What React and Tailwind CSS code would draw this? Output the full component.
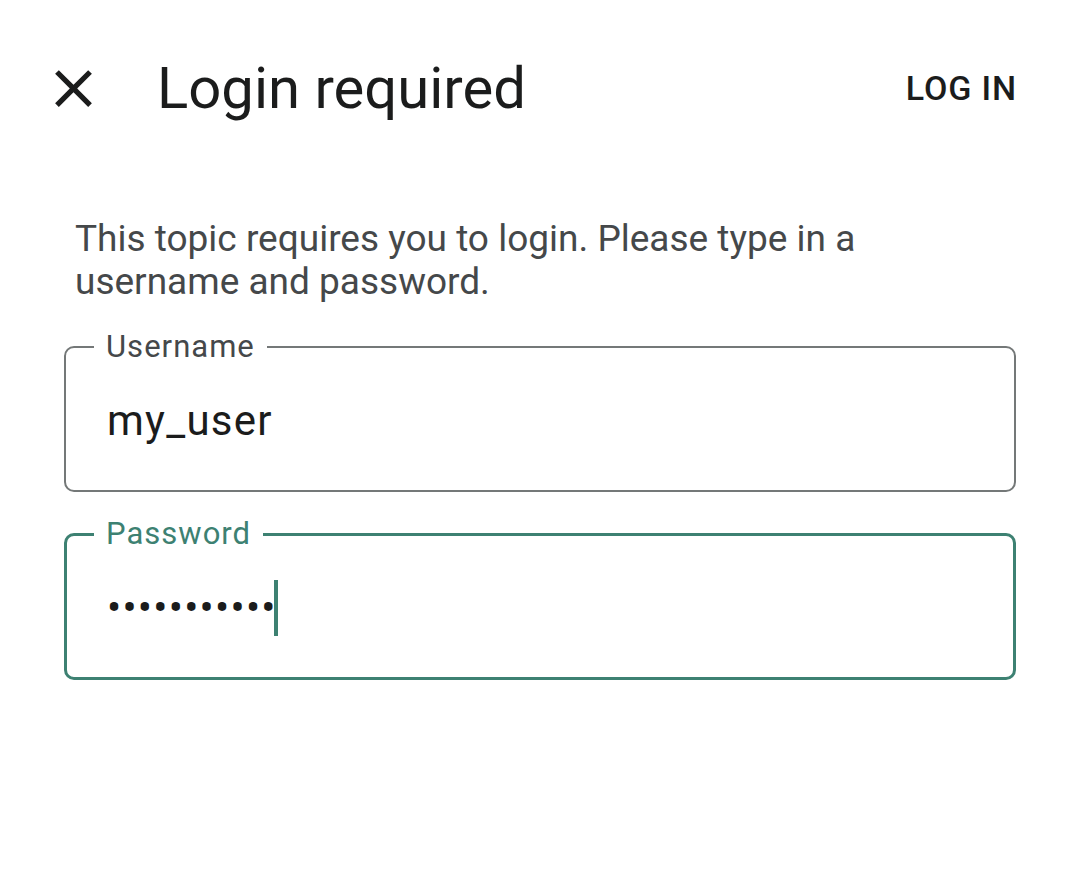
import { useState } from 'react'

function CloseIcon() {
  return (
    <svg viewBox="0 0 24 24" className="h-[63px] w-[63px] shrink-0" fill="#1b1c1c">
      <path d="M19 6.41L17.59 5 12 10.59 6.41 5 5 6.41 10.59 12 5 17.59 6.41 19 12 13.41 17.59 19 19 17.59 13.41 12z" />
    </svg>
  )
}

function App() {
  const [username] = useState('my_user')
  const passwordLength = 11

  return (
    <div
      className="min-h-screen bg-white text-[#1b1c1c]"
      style={{ fontFamily: 'Roboto, "Noto Sans", sans-serif' }}
    >
      <header className="flex h-[176px] items-center pl-[42px] pr-[63px]">
        <CloseIcon />
        <h1 className="ml-[52px] text-[58px] leading-none font-normal">Login required</h1>
        <button type="button" className="ml-auto text-[34px] leading-none font-medium tracking-[0.025em]">
          LOG IN
        </button>
      </header>

      <main className="px-[64px]">
        <p className="mt-[41px] pl-[11px] text-[37px] leading-[43px] text-[#45484a]">
          This topic requires you to login. Please type in a username and password.
        </p>

        <fieldset className="mt-[28px] h-[161px] rounded-[10px] border-2 border-[#747878] px-0 pb-0">
          <legend className="ml-[28px] px-[12px] text-[31px] leading-[32px] tracking-[0.033em] text-[#45484a]">
            Username
          </legend>
          <div className="flex h-[125px] items-center pl-[41px] pb-[10px] text-[42px] tracking-[0.03em] text-[#1b1c1c]">
            {username}
          </div>
        </fieldset>

        <fieldset className="mt-[26px] h-[162px] rounded-[10px] border-[3px] border-[#3d8172] px-0 pb-0">
          <legend className="ml-[27px] px-[12px] text-[31px] leading-[32px] tracking-[0.033em] text-[#3d8172]">
            Password
          </legend>
          <div className="flex h-[125px] items-center pl-[40px] pb-[10px] text-[42px] tracking-[0.03em] text-[#1b1c1c]">
            <span>{'\u2022'.repeat(passwordLength)}</span>
            <span className="-ml-[3px] h-[56px] w-[4px] bg-[#3d8172]" />
          </div>
        </fieldset>
      </main>
    </div>
  )
}

export default App
